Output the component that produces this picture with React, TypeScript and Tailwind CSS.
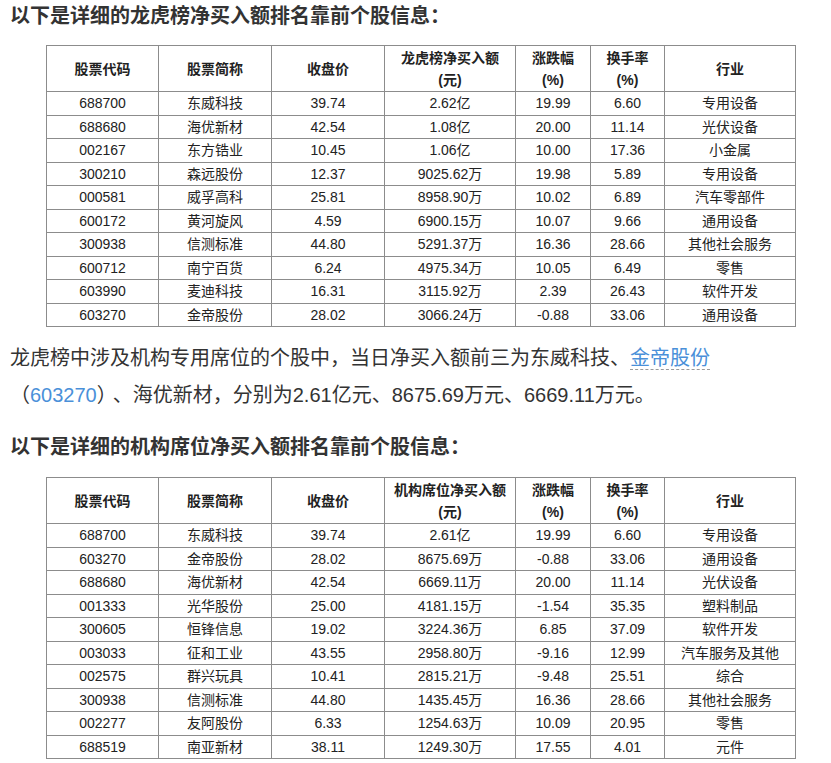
const font = { fontFamily: '"Liberation Sans", "Noto Sans CJK SC", sans-serif' };

type Row = [string, string, string, string, string, string, string];

const table1: Row[] = [
  ["688700", "东威科技", "39.74", "2.62亿", "19.99", "6.60", "专用设备"],
  ["688680", "海优新材", "42.54", "1.08亿", "20.00", "11.14", "光伏设备"],
  ["002167", "东方锆业", "10.45", "1.06亿", "10.00", "17.36", "小金属"],
  ["300210", "森远股份", "12.37", "9025.62万", "19.98", "5.89", "专用设备"],
  ["000581", "威孚高科", "25.81", "8958.90万", "10.02", "6.89", "汽车零部件"],
  ["600172", "黄河旋风", "4.59", "6900.15万", "10.07", "9.66", "通用设备"],
  ["300938", "信测标准", "44.80", "5291.37万", "16.36", "28.66", "其他社会服务"],
  ["600712", "南宁百货", "6.24", "4975.34万", "10.05", "6.49", "零售"],
  ["603990", "麦迪科技", "16.31", "3115.92万", "2.39", "26.43", "软件开发"],
  ["603270", "金帝股份", "28.02", "3066.24万", "-0.88", "33.06", "通用设备"],
];

const table2: Row[] = [
  ["688700", "东威科技", "39.74", "2.61亿", "19.99", "6.60", "专用设备"],
  ["603270", "金帝股份", "28.02", "8675.69万", "-0.88", "33.06", "通用设备"],
  ["688680", "海优新材", "42.54", "6669.11万", "20.00", "11.14", "光伏设备"],
  ["001333", "光华股份", "25.00", "4181.15万", "-1.54", "35.35", "塑料制品"],
  ["300605", "恒锋信息", "19.02", "3224.36万", "6.85", "37.09", "软件开发"],
  ["003033", "征和工业", "43.55", "2958.80万", "-9.16", "12.99", "汽车服务及其他"],
  ["002575", "群兴玩具", "10.41", "2815.21万", "-9.48", "25.51", "综合"],
  ["300938", "信测标准", "44.80", "1435.45万", "16.36", "28.66", "其他社会服务"],
  ["002277", "友阿股份", "6.33", "1254.63万", "10.09", "20.95", "零售"],
  ["688519", "南亚新材", "38.11", "1249.30万", "17.55", "4.01", "元件"],
];

const widths = ["w-[112px]", "w-[113px]", "w-[113px]", "w-[131px]", "w-[75px]", "w-[74px]", "w-[131px]"];

function StockTable({ amountLabel, rows }: { amountLabel: string; rows: Row[] }) {
  const cell = "border border-[#8c8c8c] text-center align-middle p-0";
  return (
    <table className="ml-[46px] w-[750px] border-collapse table-fixed text-[14px] text-[#222]">
      <colgroup>
        {widths.map((w, i) => (
          <col key={i} className={w} />
        ))}
      </colgroup>
      <thead>
        <tr className="h-[46px] font-bold leading-[22px]">
          <th className={cell}>股票代码</th>
          <th className={cell}>股票简称</th>
          <th className={cell}>收盘价</th>
          <th className={cell}>
            {amountLabel}
            <br />
            (元)
          </th>
          <th className={cell}>
            涨跌幅
            <br />
            (%)
          </th>
          <th className={cell}>
            换手率
            <br />
            (%)
          </th>
          <th className={cell}>行业</th>
        </tr>
      </thead>
      <tbody>
        {rows.map((r, i) => (
          <tr key={i} className="h-[23.5px] leading-[20px]">
            {r.map((v, j) => (
              <td key={j} className={cell}>
                {v}
              </td>
            ))}
          </tr>
        ))}
      </tbody>
    </table>
  );
}

export default function App() {
  return (
    <div className="w-[831px] h-[763px] overflow-hidden bg-white text-[#333]" style={font}>
      <h2 className="pl-[10px] pt-[3px] text-[20px] leading-[26px] font-bold text-[#333]">
        以下是详细的龙虎榜净买入额排名靠前个股信息：
      </h2>
      <div className="mt-[16px]">
        <StockTable amountLabel="龙虎榜净买入额" rows={table1} />
      </div>

      {/* 段落 */}
      <p className="mt-[13px] pl-[10px] pr-[10px] text-[20px] leading-[37px] text-[#333]">
        龙虎榜中涉及机构专用席位的个股中，当日净买入额前三为东威科技、
        <span className="text-[#4a90d9] border-b border-dashed border-[#9a9a9a]">金帝股份</span>
        <br />
        （<span className="text-[#4a90d9]">603270</span>）<span className="ml-[6px]">、</span>海优新材，分别为2.61亿元、8675.69万元、6669.11万元。
      </p>

      <h2 className="mt-[20px] pl-[10px] text-[20px] leading-[26px] font-bold text-[#333]">
        以下是详细的机构席位净买入额排名靠前个股信息：
      </h2>
      <div className="mt-[17px]">
        <StockTable amountLabel="机构席位净买入额" rows={table2} />
      </div>
    </div>
  );
}
